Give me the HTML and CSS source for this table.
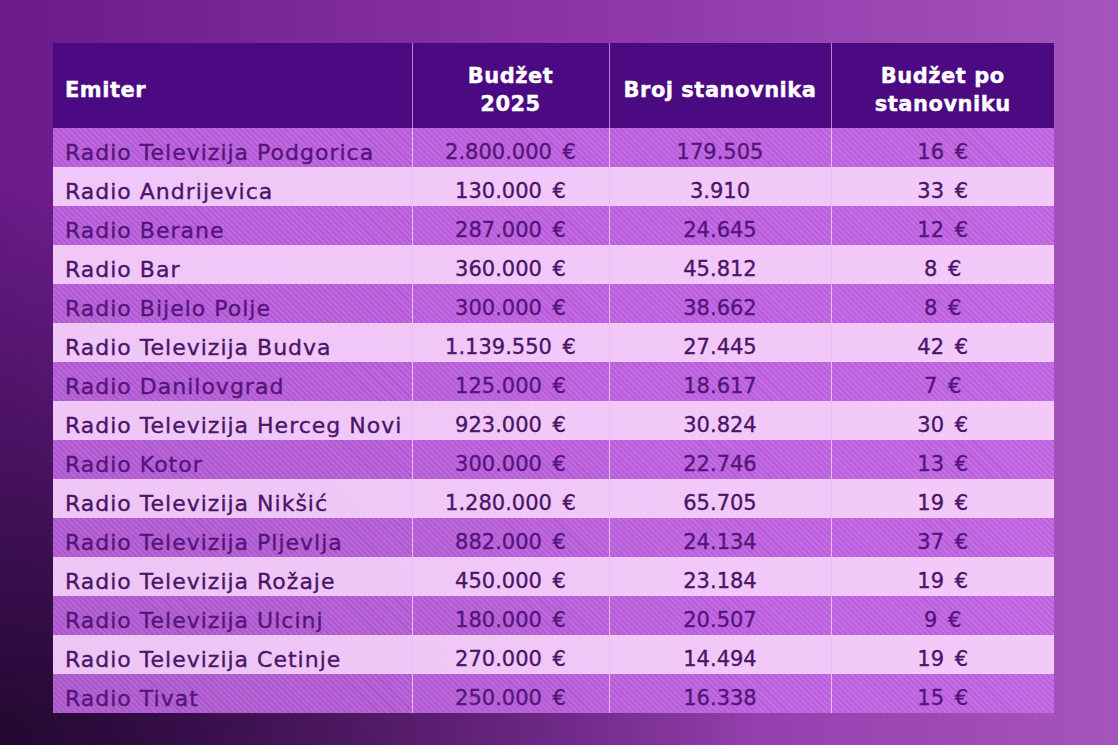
FILE: index.html
```html
<!DOCTYPE html>
<html lang="sr">
<head>
<meta charset="utf-8">
<title>Budžet emitera</title>
<link rel="stylesheet" href="styles.css">
</head>
<body>
<div class="page">
<table class="budget">
<colgroup>
<col class="c1"><col class="c2"><col class="c3"><col class="c4">
</colgroup>
<thead>
<tr><th class="name">Emiter</th><th>Budžet<br>2025</th><th>Broj stanovnika</th><th>Budžet po<br>stanovniku</th></tr>
</thead>
<tbody>
<tr><td class="name">Radio Televizija Podgorica</td><td>2.800.000 €</td><td>179.505</td><td>16 €</td></tr>
<tr><td class="name">Radio Andrijevica</td><td>130.000 €</td><td>3.910</td><td>33 €</td></tr>
<tr><td class="name">Radio Berane</td><td>287.000 €</td><td>24.645</td><td>12 €</td></tr>
<tr><td class="name">Radio Bar</td><td>360.000 €</td><td>45.812</td><td>8 €</td></tr>
<tr><td class="name">Radio Bijelo Polje</td><td>300.000 €</td><td>38.662</td><td>8 €</td></tr>
<tr><td class="name">Radio Televizija Budva</td><td>1.139.550 €</td><td>27.445</td><td>42 €</td></tr>
<tr><td class="name">Radio Danilovgrad</td><td>125.000 €</td><td>18.617</td><td>7 €</td></tr>
<tr><td class="name">Radio Televizija Herceg Novi</td><td>923.000 €</td><td>30.824</td><td>30 €</td></tr>
<tr><td class="name">Radio Kotor</td><td>300.000 €</td><td>22.746</td><td>13 €</td></tr>
<tr><td class="name">Radio Televizija Nikšić</td><td>1.280.000 €</td><td>65.705</td><td>19 €</td></tr>
<tr><td class="name">Radio Televizija Pljevlja</td><td>882.000 €</td><td>24.134</td><td>37 €</td></tr>
<tr><td class="name">Radio Televizija Rožaje</td><td>450.000 €</td><td>23.184</td><td>19 €</td></tr>
<tr><td class="name">Radio Televizija Ulcinj</td><td>180.000 €</td><td>20.507</td><td>9 €</td></tr>
<tr><td class="name">Radio Televizija Cetinje</td><td>270.000 €</td><td>14.494</td><td>19 €</td></tr>
<tr><td class="name">Radio Tivat</td><td>250.000 €</td><td>16.338</td><td>15 €</td></tr>
</tbody>
</table>
</div>
</body>
</html>
```
FILE: styles.css
```css
html, body {
  margin: 0;
  padding: 0;
}
body {
  width: 1118px;
  height: 745px;
  overflow: hidden;
  background:
    radial-gradient(ellipse 760px 560px at 0% 100%, rgba(28, 6, 40, 0.92), rgba(28, 6, 40, 0) 100%),
    linear-gradient(to right, #6a1a8a 0%, #8a34a6 50%, #a654bd 100%);
  font-family: "DejaVu Sans", "Liberation Sans", sans-serif;
}
.page {
  padding: 43px 0 0 53px;
}
.budget {
  border-collapse: collapse;
  table-layout: fixed;
  width: 1001px;
}
.c1 { width: 359px; }
.c2 { width: 197px; }
.c3 { width: 222px; }
.c4 { width: 223px; }
.budget th {
  height: 85px;
  box-sizing: border-box;
  background: #4b0a82;
  color: #ffffff;
  font-weight: 700;
  font-size: 21px;
  letter-spacing: 0.5px;
  line-height: 28px;
  text-align: center;
  padding: 8px 4px 0;
  border-left: 1px solid #b884d8;
  -webkit-text-stroke: 0.4px #ffffff;
}
.budget th:first-child { border-left: none; }
.budget th.name {
  text-align: left;
  padding-left: 12px;
}
.budget td {
  height: 39px;
  box-sizing: border-box;
  padding: 10px 4px 0;
  font-size: 21px;
  letter-spacing: 0;
  word-spacing: 4px;
  line-height: 29px;
  color: #4a1468;
  text-align: center;
  border-left: 1px solid #e6bdf4;
  white-space: nowrap;
  -webkit-text-stroke: 0.35px currentColor;
  overflow: hidden;
}
.budget td:first-child { border-left: none; }
.budget td.name {
  text-align: left;
  padding-left: 12px;
  font-size: 22px;
  letter-spacing: 1px;
  word-spacing: 0;
}
.budget tbody tr:nth-child(odd) td {
  background:
    repeating-linear-gradient(45deg, rgba(110, 30, 150, 0) 0 2.5px, rgba(110, 30, 150, 0.18) 2.5px 4px),
    rgba(205, 115, 238, 0.84);
  color: #54157a;
}
.budget tbody tr:nth-child(even) td {
  background: rgba(246, 206, 252, 0.96);
}
```
